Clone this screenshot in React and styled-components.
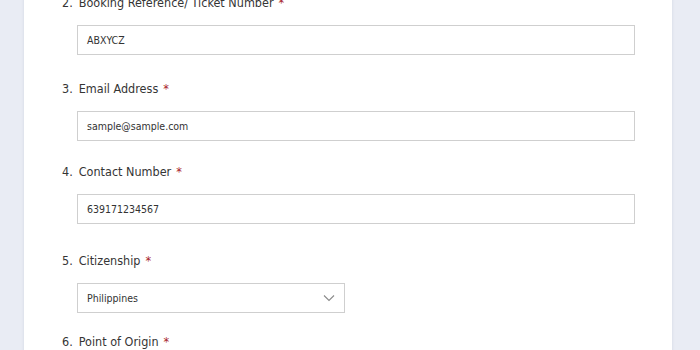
import React from "react";
import styled, { createGlobalStyle } from "styled-components";

const GlobalStyle = createGlobalStyle`
  html, body {
    margin: 0;
    padding: 0;
    background: #e9ecf4;
    overflow: hidden;
  }
`;

const fields = [
  { no: 2, label: "Booking Reference/ Ticket Number", value: "ABXYCZ", space: 0 },
  { no: 3, label: "Email Address", value: "sample@sample.com", space: 25 },
  { no: 4, label: "Contact Number", value: "639171234567", space: 22 },
  { no: 5, label: "Citizenship", value: "Philippines", select: true, space: 28 },
  { no: 6, label: "Point of Origin", space: 20 },
];

const Chevron = () => (
  <svg width="12" height="8" viewBox="0 0 12 8" fill="none">
    <path d="M1 1.5 L6 6.5 L11 1.5" stroke="#8a8a8a" strokeWidth="1.1" />
  </svg>
);

class App extends React.Component {
  render() {
    return (
      <Page>
        <GlobalStyle />
        <Card>
          {fields.map((f) => (
            <Question key={f.no} space={f.space}>
              <Label>
                <Num>{f.no}.</Num>
                {f.label}
                <Req>*</Req>
              </Label>
              {f.value &&
                (f.select ? (
                  <Select>
                    <span>{f.value}</span>
                    <Chevron />
                  </Select>
                ) : (
                  <Input>{f.value}</Input>
                ))}
            </Question>
          ))}
        </Card>
      </Page>
    );
  }
}
export default App;

const Page = styled.div`
  width: 700px;
  height: 350px;
  overflow: hidden;
  padding: 0 28px 0 24px;
  box-sizing: border-box;
  font-family: "DejaVu Sans Condensed", "Liberation Sans", sans-serif;
`;

const Card = styled.div`
  background: #fff;
  margin-top: -10px;
  padding: 4px 0 40px 38px;
  min-height: 420px;
  box-shadow: 0 0 3px rgba(60, 70, 100, 0.12);
`;

const Question = styled.div`
  margin-top: ${(p) => p.space}px;
`;

const Label = styled.div`
  display: flex;
  align-items: baseline;
  font-size: 12.5px;
  line-height: 18px;
  color: #353535;
`;

const Num = styled.span`
  margin-right: 6px;
`;

const Req = styled.span`
  color: #a8222a;
  margin-left: 5px;
`;

const Input = styled.div`
  margin: 13px 0 0 15px;
  width: 558px;
  height: 30px;
  box-sizing: border-box;
  border: 1px solid #cfcfcf;
  padding: 0 9px;
  display: flex;
  align-items: center;
  font-size: 10.5px;
  color: #333;
`;

const Select = styled(Input)`
  width: 268px;
  justify-content: space-between;
  padding-right: 9px;
`;
